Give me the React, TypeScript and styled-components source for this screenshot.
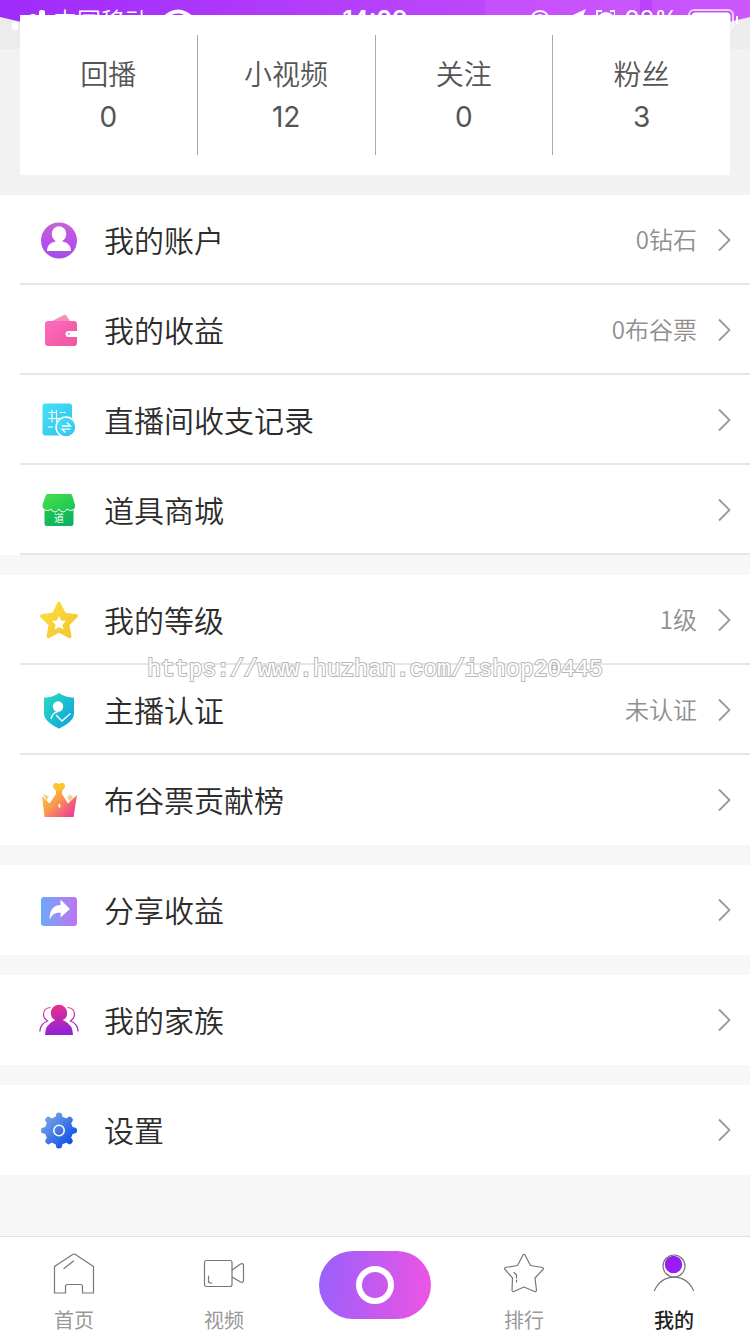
import React from "react";
import styled, { createGlobalStyle } from "styled-components";

const GlobalStyle = createGlobalStyle`
  * { box-sizing: border-box; }
  body {
    margin: 0;
    background: #f7f7f8;
    font-family: "Inter", "Noto Sans CJK SC", sans-serif;
  }
  button { font: inherit; border: 0; padding: 0; background: none; cursor: pointer; }
`;

const Page = styled.div`
  display: flex;
  flex-direction: column;
  min-height: 100vh;
`;

const Top = styled.header`
  padding-bottom: 20px;
  background: #f2f2f2;
`;

const StatusBar = styled.div`
  position: relative;
  height: 49px;
  overflow: hidden;
  background: #ececec;
  color: #fff;
`;

const Curve = styled.svg`
  position: absolute;
  inset: 0;
  width: 100%;
  height: 49px;
`;

const StatusRow = styled.div`
  position: relative;
  display: grid;
  grid-template-columns: 1fr auto 1fr;
  align-items: center;
  height: 40px;
  padding: 0 12px;
  font-size: 24px;
  line-height: 40px;
`;

const StatusSide = styled.div<{ $end?: boolean }>`
  display: flex;
  align-items: center;
  justify-content: ${(p) => (p.$end ? "flex-end" : "flex-start")};
  gap: ${(p) => (p.$end ? "10px" : "7px")};
  white-space: nowrap;
`;

const Carrier = styled.span`
  margin-right: 7px;
  font-family: "Noto Sans CJK SC", sans-serif;
  font-weight: 350;
`;

const Clock = styled.time`
  font-weight: 600;
`;

const Stats = styled.section`
  position: relative;
  display: flex;
  height: 160px;
  margin: -34px 20px 0;
  padding: 20px 0;
  background: #fff;
`;

const Stat = styled.button`
  flex: 1;
  height: 120px;
  color: #555;
  font-size: 28px;
  line-height: 44px;
  text-align: center;
  &:not(:last-child) { border-right: 1px solid #a9a9a9; }
`;

const StatLabel = styled.span`
  display: block;
  font-family: "Noto Sans CJK SC", sans-serif;
  font-weight: 350;
`;

const StatValue = styled.span`
  display: block;
`;

const Menu = styled.main`
  position: relative;
  display: flex;
  flex: 1;
  flex-direction: column;
  gap: 20px;
  padding-bottom: 60px;
`;

const Group = styled.section`
  background: #fff;
`;

const Row = styled.button<{ $line: boolean }>`
  display: flex;
  align-items: center;
  width: calc(100% - 20px);
  height: 90px;
  margin-left: 20px;
  padding: 0 19px;
  box-shadow: ${(p) => (p.$line ? "inset 0 -2px #e6e6ea" : "none")};
  text-align: left;
`;

const RowIcon = styled.svg`
  flex: none;
  width: 40px;
  height: 40px;
`;

const RowText = styled.span`
  padding-bottom: 2px;
  font-family: "Noto Sans CJK SC", sans-serif;
  font-weight: 350;
  line-height: 44px;
`;

const RowLabel = styled(RowText)`
  flex: 1;
  margin-left: 25px;
  color: #2c2c2c;
  font-size: 30px;
`;

const RowValue = styled(RowText)`
  margin-right: 20px;
  color: #8f8f8f;
  font-size: 24px;
`;

const Chevron = styled.svg`
  flex: none;
  width: 14px;
  height: 24px;
  fill: none;
  stroke: #999;
  stroke-width: 1.8;
`;

const Watermark = styled.div`
  position: absolute;
  top: 461px;
  left: 0;
  right: 0;
  color: #fff;
  font-family: "Liberation Mono", monospace;
  font-size: 23px;
  line-height: 28px;
  text-align: center;
  pointer-events: none;
  -webkit-text-stroke: 2px #b8b8b8;
  paint-order: stroke fill;
`;

const TabBar = styled.nav`
  position: sticky;
  bottom: 0;
  display: grid;
  grid-template-columns: repeat(5, 1fr);
  height: 98px;
  background: #fff;
  border-top: 1px solid #e0e0e0;
`;

const Tab = styled.button<{ $active?: boolean }>`
  display: flex;
  flex-direction: column;
  align-items: center;
  gap: 12px;
  padding: 15px 2px 0 0;
  color: ${(p) => (p.$active ? "#222" : "#999")};
  font-family: "Noto Sans CJK SC", sans-serif;
  font-size: 20px;
  font-weight: ${(p) => (p.$active ? 500 : 400)};
  line-height: 28px;
`;

const TabIcon = styled.svg`
  width: 42px;
  height: 42px;
  fill: none;
  stroke: #777;
  stroke-width: 1.2;
  stroke-linejoin: round;
  stroke-linecap: round;
`;

const LiveCell = styled.div`
  display: flex;
  justify-content: center;
  padding-top: 14px;
`;

const LiveButton = styled.button`
  display: flex;
  align-items: center;
  justify-content: center;
  width: 112px;
  height: 68px;
  border-radius: 34px;
  background: linear-gradient(95deg, #9761fb, #c45af0 50%, #ee54e4);
`;

const LiveRing = styled.span`
  width: 38px;
  height: 38px;
  border: 6px solid #fff;
  border-radius: 50%;
`;

function Gradient({ id, from, to, flat }: { id: string; from: string; to: string; flat?: boolean }) {
  return (
    <linearGradient id={id} x1="0" y1="0" x2="1" y2={flat ? "0" : "1"}>
      <stop offset="0" stopColor={from} />
      <stop offset="1" stopColor={to} />
    </linearGradient>
  );
}

const icons: Record<string, React.ReactNode> = {
  account: (
    <>
      <linearGradient id="account" x1="0" y1="0" x2="0" y2="1">
        <stop offset="0" stopColor="#c463d2" />
        <stop offset="0.55" stopColor="#b94fee" />
        <stop offset="1" stopColor="#a050e6" />
      </linearGradient>
      <circle cx="20" cy="20.500" r="18" fill="url(#account)" />
      <ellipse cx="20" cy="14" rx="7.300" ry="7.800" fill="#fff" />
      <path d="M8 31C8 25 12 22.500 16.500 21.500V19h7v2.500C28 22.500 32 25 32 31z" fill="#fff" />
    </>
  ),
  wallet: (
    <>
      <Gradient id="wallet" from="#fb6cc0" to="#f0559a" />
      <path d="M13 11l12-6q1.700-.6 2.600 1l3.400 5z" fill="#f58fbd" />
      <path d="M9 11h26a3 3 0 0 1 3 3v7h-8.500a3 3 0 0 0 0 6H38v6a3 3 0 0 1-3 3H9a3 3 0 0 1-3-3V14a3 3 0 0 1 3-3z" fill="url(#wallet)" />
      <circle cx="30" cy="24" r="1" fill="#e887b8" />
    </>
  ),
  records: (
    <>
      <Gradient id="records" from="#43e3f8" to="#34bfea" />
      <rect x="3.500" y="3.500" width="29.500" height="32" rx="3" fill="url(#records)" />
      <path d="M9.500 12.500h8M21 12.500h5.500M9 18.500h12M9 27h5M13 10v12M17.500 10v12" stroke="#fff" strokeWidth="1.100" fill="none" />
      <circle cx="27" cy="27" r="10" fill="url(#records)" stroke="#fff" strokeWidth="1.500" />
      <path d="M23 26h8.500l-3.500-3.500M31.500 29.200H23l3.500 3.300" stroke="#fff" strokeWidth="1.300" fill="none" />
    </>
  ),
  shop: (
    <>
      <Gradient id="roof" from="#4be04a" to="#14c455" />
      <Gradient id="store" from="#20c550" to="#0aae62" />
      <path d="M5.500 20h29v13.500q0 2.500-2.500 2.500H8q-2.500 0-2.500-2.500z" fill="url(#store)" />
      <path d="M8 3.500h24l1.500 1.500L36.500 15q.5 5-4.500 5.500-2.500 0-4-1.500-1.500 3-4 3-3 0-4-3-1.500 3-4.300 3-2.600 0-3.700-3-1.500 1.700-4 1.500Q3 20 3 15L6.500 5z" fill="url(#roof)" stroke="#fff" strokeWidth="0.900" />
      <text x="20" y="32" textAnchor="middle" fontSize="10" fontFamily="Noto Sans CJK SC, sans-serif" fill="#fff">道</text>
    </>
  ),
  level: (
    <>
      <Gradient id="level" from="#fae041" to="#f5c32f" />
      <path d="M20 3.500L25.300 14.300 37.200 16 28.600 24.400 30.700 36.500 20 30.800 9.300 36.500 11.400 24.400 2.800 16 14.700 14.300z" fill="url(#level)" stroke="url(#level)" strokeWidth="3.500" strokeLinejoin="round" />
      <path d="M20 16l2.200 4.400 4.800.7-3.500 3.400.9 4.900-4.400-2.300-4.400 2.300.9-4.900-3.500-3.400 4.800-.7z" fill="#fff" />
    </>
  ),
  verify: (
    <>
      <Gradient id="verify" from="#27dcc1" to="#0e9fe0" />
      <path d="M20 3c4.500 3 9 4.500 15 4.800V23.500c0 6.500-7 10.800-15 15.300C12 34.300 5 30 5 23.500V7.800C11 7.500 15.500 6 20 3z" fill="url(#verify)" />
      <circle cx="19" cy="16.500" r="5.200" fill="#fff" />
      <path d="M12 29q1.500-6.500 7-7.300M17 25l6 6 8.500-7.500" stroke="#fff" strokeWidth="1.300" fill="none" />
    </>
  ),
  crown: (
    <>
      <linearGradient id="crown" gradientUnits="userSpaceOnUse" x1="8" y1="10" x2="34" y2="36">
        <stop offset="0" stopColor="#fbc934" />
        <stop offset="0.400" stopColor="#fa9a4c" />
        <stop offset="1" stopColor="#ee369d" />
      </linearGradient>
      <path d="M17 14v-3L14.500 7.500Q13.500 3.500 17 3q2 0 3 1.500Q21 3 23 3q3.500.5 2.500 4.500L23 11v3l6 9.500 9-8.500-3.500 22h-29L3 16l7.500 7.500z" fill="url(#crown)" />
      <path d="M14.500 7.500Q13.500 3.500 17 3q2 0 3 1.500Q21 3 23 3q3.500.5 2.500 4.500L23 11h-6z" fill="#f9c530" />
      <path d="M4 14l6 2.500-2.500 4zM31 14.500l3 3-3 4-3-4z" fill="#f6cf8d" />
      <path d="M20.500 23l1.200 2.700-1.200 2.700-1.500-2.700z" fill="#fff" />
    </>
  ),
  share: (
    <>
      <Gradient id="share" from="#6daaf8" to="#bd74f2" flat />
      <rect x="2" y="7" width="36" height="29" rx="3" fill="url(#share)" />
      <path d="M10.500 29.500Q10.500 15.500 21.500 15V9.500l9.500 9.500-9.500 8.500v-5Q14 22 10.500 29.500z" fill="#fff" />
    </>
  ),
  family: (
    <>
      <linearGradient id="family" gradientUnits="userSpaceOnUse" x1="16" y1="4" x2="22" y2="35">
        <stop offset="0" stopColor="#ee2f88" />
        <stop offset="1" stopColor="#8a22dc" />
      </linearGradient>
      <circle cx="20" cy="13" r="8.200" fill="url(#family)" />
      <path d="M6 35Q6 25 14.500 21l2-1h7l2 1Q34 25 34 35z" fill="url(#family)" />
      <path d="M11.500 7.500Q4.500 8 4.500 14.500q0 3.800 4 6.500Q1.500 23.500.8 31.500M28.500 7.500q7 .5 7 7 0 3.800-4 6.500 7 2.500 7.700 10.500" stroke="url(#family)" strokeWidth="1.200" fill="none" />
    </>
  ),
  settings: (
    <>
      <linearGradient id="settings" gradientUnits="userSpaceOnUse" x1="6" y1="6" x2="32" y2="32">
        <stop offset="0" stopColor="#7aa8e4" />
        <stop offset="1" stopColor="#1252e8" />
      </linearGradient>
      <mask id="gear" maskUnits="userSpaceOnUse" x="0" y="0" width="40" height="40">
        <circle cx="20" cy="20.500" r="14" fill="#fff" />
        {[0, 45, 90, 135, 180, 225, 270, 315].map((angle) => (
          <path key={angle} d="M16 8.500l1-3.500q0-2.500 3-2.500t3 2.500l1 3.500z" transform={`rotate(${angle} 20 20.5)`} fill="#fff" />
        ))}
      </mask>
      <rect width="40" height="40" fill="url(#settings)" mask="url(#gear)" />
      <circle cx="20" cy="20.500" r="5.200" fill="none" stroke="#fff" strokeWidth="1.500" />
    </>
  ),
};

type Item = { icon: string; label: string; value?: string; line?: boolean };

const groups: Item[][] = [
  [
    { icon: "account", label: "我的账户", value: "0钻石", line: true },
    { icon: "wallet", label: "我的收益", value: "0布谷票", line: true },
    { icon: "records", label: "直播间收支记录", line: true },
    { icon: "shop", label: "道具商城", line: true },
  ],
  [
    { icon: "level", label: "我的等级", value: "1级", line: true },
    { icon: "verify", label: "主播认证", value: "未认证", line: true },
    { icon: "crown", label: "布谷票贡献榜" },
  ],
  [{ icon: "share", label: "分享收益" }],
  [{ icon: "family", label: "我的家族" }],
  [{ icon: "settings", label: "设置" }],
];

const stats = [
  ["回播", "0"],
  ["小视频", "12"],
  ["关注", "0"],
  ["粉丝", "3"],
];

export default function App() {
  return (
    <Page>
      <GlobalStyle />
      <Top>
        <StatusBar>
          <Curve viewBox="0 0 750 49" preserveAspectRatio="none" aria-hidden="true">
            <Gradient id="sky" from="#a02afa" to="#cb58fc" flat />
            <path d="M0 0h750v17Q375 110 0 17z" fill="url(#sky)" />
            <path d="M485 0h155v49H485z" fill="#d25cff" opacity="0.4" />
            <path d="M640 0h12v49h-12z" fill="#b032f8" opacity="0.5" />
          </Curve>
          <StatusRow>
            <StatusSide>
              <svg width="34" height="20" fill="#fff" aria-hidden="true">
                <rect y="12" width="6" height="8" rx="2" />
                <rect x="9" y="8" width="6" height="12" rx="2" />
                <rect x="18" y="4" width="6" height="16" rx="2" />
                <rect x="27" width="6" height="20" rx="2" />
              </svg>
              <Carrier>中国移动</Carrier>
              <svg width="30" height="22" viewBox="0 0 30 22" fill="none" stroke="#fff" strokeWidth="4" aria-hidden="true">
                <path d="M1 9Q15-4 29 9M7 15q8-7 16 0M13 20h4" />
              </svg>
            </StatusSide>
            <Clock>14:09</Clock>
            <StatusSide $end>
              <svg width="88" height="22" fill="none" stroke="#fff" strokeWidth="2" aria-hidden="true">
                <circle cx="13" cy="11" r="9" />
                <path d="M9 11h8v5H9zM10 11V8q3-4 6 0v3" />
                <path d="M42 9L57 2l-6 15-2-7z" fill="#fff" />
                <circle cx="79" cy="12" r="8" fill="#fff" />
                <path d="M70 6V2h5M83 2h5v4" />
              </svg>
              <span>98%</span>
              <svg width="50" height="22" fill="none" stroke="#fff" aria-hidden="true">
                <rect x="1" y="1" width="44" height="20" rx="5" strokeWidth="2" opacity="0.7" />
                <rect x="4" y="4" width="38" height="14" rx="3" fill="#fff" />
                <path d="M49 7v8" strokeWidth="2" />
              </svg>
            </StatusSide>
          </StatusRow>
        </StatusBar>
        <Stats>
          {stats.map(([label, value]) => (
            <Stat key={label}>
              <StatLabel>{label}</StatLabel>
              <StatValue>{value}</StatValue>
            </Stat>
          ))}
        </Stats>
      </Top>
      <Menu>
        {groups.map((items) => (
          <Group key={items[0].icon}>
            {items.map((item) => (
              <Row key={item.icon} $line={Boolean(item.line)}>
                <RowIcon viewBox="0 0 40 40" aria-hidden="true">{icons[item.icon]}</RowIcon>
                <RowLabel>{item.label}</RowLabel>
                {item.value && <RowValue>{item.value}</RowValue>}
                <Chevron viewBox="0 0 14 24" aria-hidden="true">
                  <path d="M2 1.500l10.500 10.500L2 22.500" />
                </Chevron>
              </Row>
            ))}
          </Group>
        ))}
        <Watermark>https://www.huzhan.com/ishop20445</Watermark>
      </Menu>
      <TabBar>
        <Tab>
          <TabIcon viewBox="0 0 42 42" aria-hidden="true">
            <path d="M1.500 14.500L20 2.300q1-.6 2 0l18.500 12.200V41H29.500v-6.500q0-2-2-2h-13q-2 0-2 2V41h-11z" />
            <path d="M11 16.500l9.500-7.500" />
          </TabIcon>
          首页
        </Tab>
        <Tab>
          <TabIcon viewBox="0 0 42 42" aria-hidden="true">
            <rect x="1.500" y="8.500" width="27.500" height="26" rx="2" />
            <path d="M29 18l8.500-6q3-1 3 1.500v15q0 2.500-3 1.500L29 25M5.500 24v5q0 2 2 2h1.500" />
          </TabIcon>
          视频
        </Tab>
        <LiveCell>
          <LiveButton aria-label="直播">
            <LiveRing />
          </LiveButton>
        </LiveCell>
        <Tab>
          <TabIcon viewBox="0 0 42 42" aria-hidden="true">
            <path d="M20 3q1-1.500 2 0l5.500 10.500 12 2q1.500.7.5 2l-8 8.500 1.500 12.500q-.3 1.500-2 1L21 35l-10 4.500q-1.700.5-2-1L9.500 26 2 17.500q-1-1.300.5-2l12-2z" />
            <path d="M11 20.500l2.500 2.500v3M13.500 28v2" />
          </TabIcon>
          排行
        </Tab>
        <Tab $active>
          <TabIcon viewBox="0 0 42 42" aria-hidden="true">
            <circle cx="21" cy="14" r="11" />
            <circle cx="20.500" cy="12.500" r="8.700" fill="#9a1cf0" stroke="none" />
            <path d="M1.500 38.500Q7.500 25.500 21 25.200 34.500 25.500 40.500 38.500" />
          </TabIcon>
          我的
        </Tab>
      </TabBar>
    </Page>
  );
}
